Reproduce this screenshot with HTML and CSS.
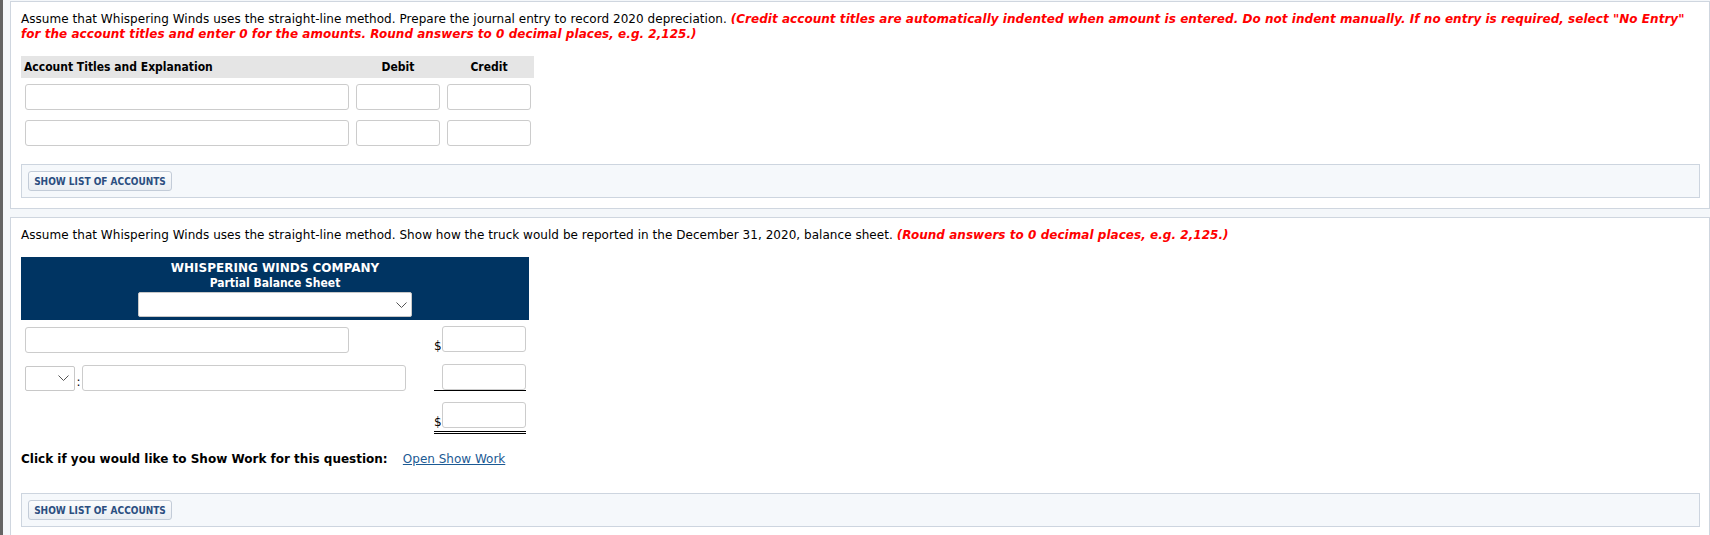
FILE: index.html
```html
<!DOCTYPE html>
<html lang="en">
<head>
<meta charset="utf-8">
<title>Whispering Winds</title>
<link rel="stylesheet" href="styles.css">
</head>
<body>
<div class="page">
  <div class="strip"></div>
  <main class="content">
    <section class="panel">
      <p class="q">Assume that Whispering Winds uses the straight-line method. Prepare the journal entry to record 2020 depreciation. <em class="note">(Credit account titles are automatically indented when amount is entered. Do not indent manually. If no entry is required, select "No Entry" for the account titles and enter 0 for the amounts. Round answers to 0 decimal places, e.g. 2,125.)</em></p>
      <div class="je">
        <div class="je-head">
          <span class="je-h-acct">Account Titles and Explanation</span>
          <span class="je-h-amt">Debit</span>
          <span class="je-h-amt">Credit</span>
        </div>
        <div class="je-rows">
          <div class="je-row">
            <input class="inp" type="text" aria-label="Account title 1">
            <input class="inp" type="text" aria-label="Debit 1">
            <input class="inp" type="text" aria-label="Credit 1">
          </div>
          <div class="je-row">
            <input class="inp" type="text" aria-label="Account title 2">
            <input class="inp" type="text" aria-label="Debit 2">
            <input class="inp" type="text" aria-label="Credit 2">
          </div>
        </div>
      </div>
      <div class="btnbar"><button class="btn" type="button">SHOW LIST OF ACCOUNTS</button></div>
    </section>

    <section class="panel">
      <p class="q">Assume that Whispering Winds uses the straight-line method. Show how the truck would be reported in the December 31, 2020, balance sheet. <em class="note">(Round answers to 0 decimal places, e.g. 2,125.)</em></p>
      <div class="bs">
        <div class="bs-head">
          <div class="bs-title">WHISPERING WINDS COMPANY</div>
          <div class="bs-sub">Partial Balance Sheet</div>
          <div class="fsel fsel-wide">
            <svg class="chev" width="11" height="6" viewBox="0 0 11 6"><path d="M0.5 0.5 L5.5 5.5 L10.5 0.5" fill="none" stroke="#555" stroke-width="1"/></svg>
          </div>
        </div>
        <div class="bs-rows">
          <div class="bs-row bs-row1">
            <div class="bs-left"><input class="inp w324" type="text" aria-label="Item"></div>
            <div class="amt-cell"><span class="dollar">$</span><input class="inp w84" type="text" aria-label="Amount 1"></div>
          </div>
          <div class="bs-row bs-row2">
            <div class="bs-left">
              <div class="fsel fsel-small">
                <svg class="chev" width="11" height="6" viewBox="0 0 11 6"><path d="M0.5 0.5 L5.5 5.5 L10.5 0.5" fill="none" stroke="#555" stroke-width="1"/></svg>
              </div>
              <span class="colon">:</span>
              <input class="inp w324" type="text" aria-label="Less item">
            </div>
            <div class="amt-cell under1"><span class="dollar"></span><input class="inp w84" type="text" aria-label="Amount 2"></div>
          </div>
          <div class="bs-row bs-row3">
            <div class="bs-left"></div>
            <div class="amt-cell under2"><span class="dollar">$</span><input class="inp w84" type="text" aria-label="Total"></div>
          </div>
        </div>
      </div>
      <p class="showwork">Click if you would like to Show Work for this question: <a class="swlink" href="#">Open Show Work</a></p>
      <div class="btnbar btnbar2"><button class="btn" type="button">SHOW LIST OF ACCOUNTS</button></div>
    </section>
  </main>
</div>
</body>
</html>
```

FILE: styles.css
```css
html, body {
  margin: 0;
  height: 100%;
  overflow: hidden;
}
body {
  background: #f4f7fa;
  font-family: "DejaVu Sans", Verdana, sans-serif;
  font-size: 12px;
  color: #000;
}
.page {
  display: flex;
  min-height: 100%;
}
.strip {
  width: 3px;
  flex: none;
  background: #646464;
}
.content {
  flex: 1;
  padding: 1px 0 0 7px;
}
.panel {
  background: #fff;
  border: 1px solid #cfd6df;
  padding: 10px 9px 10px 10px;
}
.panel + .panel {
  margin-top: 8px;
}
.q {
  margin: 0;
  line-height: 15px;
  letter-spacing: 0.04px;
}
.note {
  color: #f00;
  font-weight: bold;
  font-style: italic;
}
.inp {
  box-sizing: border-box;
  height: 26px;
  margin: 0;
  padding: 0 4px;
  border: 1px solid #cccccc;
  border-radius: 3px;
  background: #fff;
  font: inherit;
}

/* journal entry */
.je {
  width: 513px;
  margin-top: 14px;
}
.je-head,
.je-row {
  display: grid;
  grid-template-columns: 324px 84px 84px;
  column-gap: 7px;
  padding: 0 3px 0 4px;
}
.je-head {
  height: 22px;
  align-items: center;
  background: #e5e5e5;
  font-family: "DejaVu Sans Condensed", "DejaVu Sans", sans-serif;
  font-stretch: condensed;
  font-weight: bold;
}
.je-h-acct {
  margin-left: -1px;
}
.je-h-amt {
  text-align: center;
}
.je-rows {
  margin-top: 6px;
  display: flex;
  flex-direction: column;
  gap: 10px;
}
.je-row .inp {
  width: 100%;
}

/* button bar */
.btnbar {
  margin-top: 18px;
  padding: 6px;
  background: #f5f8fb;
  border: 1px solid #cdd5df;
}
.btnbar2 {
  margin-top: 26px;
}
.btn {
  display: block;
  box-sizing: border-box;
  width: 144px;
  height: 20px;
  padding: 0;
  border: 1px solid #c3ccd8;
  border-radius: 3px;
  background: linear-gradient(#fbfcfd, #e9edf2);
  color: #2b4e80;
  font-family: "DejaVu Sans Condensed", "DejaVu Sans", sans-serif;
  font-stretch: condensed;
  font-weight: bold;
  font-size: 10px;
}

/* balance sheet */
.bs {
  width: 508px;
  margin-top: 14px;
}
.bs-head {
  background: #003462;
  color: #fff;
  text-align: center;
  padding: 4px 0 3px;
  line-height: 15px;
  font-family: "DejaVu Sans Condensed", "DejaVu Sans", sans-serif;
  font-stretch: condensed;
  font-weight: bold;
}
.bs-title {
  font-family: "DejaVu Sans", sans-serif;
  font-stretch: normal;
}
.fsel {
  box-sizing: border-box;
  height: 25px;
  display: flex;
  align-items: center;
  justify-content: flex-end;
  background: #fff;
  border: 1px solid #c8c8c8;
  border-radius: 2px;
}
.fsel-wide {
  width: 274px;
  margin: 1px auto 0;
  padding-right: 4px;
}
.fsel-small {
  width: 50px;
  padding-right: 5px;
}
.chev {
  display: block;
}
.bs-rows {
  margin-top: 6px;
  padding-left: 4px;
}
.bs-row {
  display: grid;
  grid-template-columns: 409px 92px;
  align-items: end;
}
.bs-row1 {
  align-items: start;
}
.bs-row1 .bs-left {
  margin-top: 1px;
}
.bs-row2,
.bs-row3 {
  margin-top: 11px;
}
.bs-left {
  display: flex;
  align-items: center;
}
.w324 {
  width: 324px;
}
.w84 {
  width: 84px;
}
.colon {
  width: 7px;
  text-align: center;
  line-height: 12px;
  align-self: flex-end;
  margin-bottom: 3px;
}
.amt-cell {
  display: flex;
  align-items: flex-end;
}
.dollar {
  width: 8px;
  flex: none;
  line-height: 12px;
}
.under1 {
  border-bottom: 1px solid #000;
}
.under2 {
  padding-bottom: 3px;
  border-bottom: 3px double #000;
}
.showwork {
  margin: 18px 0 0;
  line-height: 15px;
  font-weight: bold;
}
.swlink {
  margin-left: 11px;
  font-weight: normal;
  color: #1c5a94;
}
```
